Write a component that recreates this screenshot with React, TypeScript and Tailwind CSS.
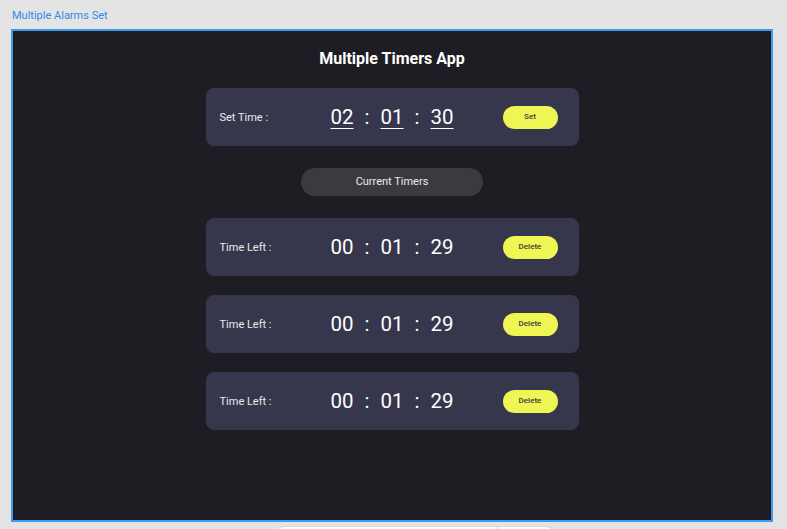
const font = { fontFamily: 'Roboto, "Noto Sans", sans-serif' };

type TimeRowProps = {
  label: string;
  parts: string[];
  action: string;
  underline?: boolean;
};

function TimeRow({ label, parts, action, underline }: TimeRowProps) {
  return (
    <div className="flex h-[58px] w-[373px] items-center rounded-lg bg-[#36364c] pl-[14px] pr-[21px]">
      <div className="w-[111px] shrink-0 pt-[3px] text-[11px] text-white/90">{label}</div>
      <div className="flex items-center gap-[11px] text-[20.5px] leading-none text-white">
        {parts.map((p, i) => (
          <div key={i} className="flex items-center gap-[11px]">
            {i > 0 && <span>:</span>}
            <span className={underline ? 'underline decoration-1 underline-offset-[4px]' : ''}>{p}</span>
          </div>
        ))}
      </div>
      <button className="ml-auto flex h-[23px] w-[55px] items-center justify-center rounded-full bg-[#eff553] text-[8px] font-medium text-[#3a3a40]">
        {action}
      </button>
    </div>
  );
}

export default function App() {
  const timers = [1, 2, 3];

  return (
    <div className="flex h-[529px] w-[787px] flex-col overflow-hidden bg-[#e4e4e4]" style={font}>
      <div className="shrink-0 px-3 pt-[9px] text-[11px] leading-[14px] text-[#2b8ce6]">Multiple Alarms Set</div>
      <div className="ml-[11px] mt-[6px] flex h-[493px] w-[762px] shrink-0 flex-col items-center border-2 border-[#3c9df0] bg-[#1e1d23]">
        <h1 className="pt-[16px] text-[16px] font-bold leading-6 text-white">Multiple Timers App</h1>
        <div className="mt-[17px]">
          <TimeRow label="Set Time :" parts={['02', '01', '30']} action="Set" underline />
        </div>
        <div className="mt-[22px] flex h-[28px] w-[182px] items-center justify-center rounded-full bg-[#3b3a3f] text-[11px] text-white/90">
          Current Timers
        </div>
        <div className="mt-[22px] flex flex-col gap-[19px]">
          {timers.map((t) => (
            <TimeRow key={t} label="Time Left :" parts={['00', '01', '29']} action="Delete" />
          ))}
        </div>
      </div>
      <div className="ml-[272px] mt-[4px] flex h-[20px] w-[285px] shrink-0 rounded-t-xl border border-[#d6d6d6] bg-white">
        <div className="w-[225px] border-r border-[#d6d6d6]" />
      </div>
    </div>
  );
}
